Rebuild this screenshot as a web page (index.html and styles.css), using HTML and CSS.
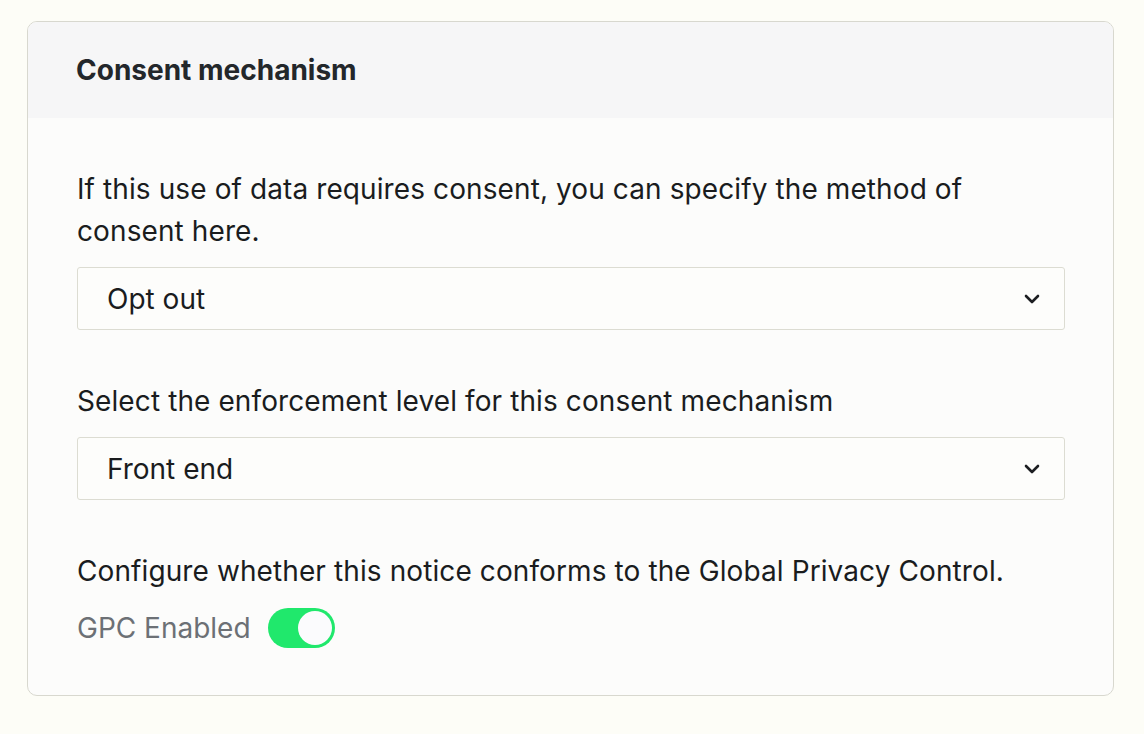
FILE: index.html
```html
<!DOCTYPE html>
<html lang="en">
<head>
<meta charset="utf-8">
<title>Consent mechanism</title>
<link rel="stylesheet" href="styles.css">
</head>
<body>
<section class="card">
  <header class="card-header">
    <h2 class="card-title">Consent mechanism</h2>
  </header>
  <div class="card-body">
    <p class="label">If this use of data requires consent, you can specify the method of consent here.</p>
    <div class="select">
      <span class="select-value">Opt out</span>
      <svg class="chevron" width="16" height="10" viewBox="0 0 16 10"><path d="M2 2 L8 8 L14 2" fill="none" stroke="#1c1e21" stroke-width="2.6" stroke-linecap="round" stroke-linejoin="round"/></svg>
    </div>
    <p class="label gap">Select the enforcement level for this consent mechanism</p>
    <div class="select">
      <span class="select-value">Front end</span>
      <svg class="chevron" width="16" height="10" viewBox="0 0 16 10"><path d="M2 2 L8 8 L14 2" fill="none" stroke="#1c1e21" stroke-width="2.6" stroke-linecap="round" stroke-linejoin="round"/></svg>
    </div>
    <p class="label gap">Configure whether this notice conforms to the Global Privacy Control.</p>
    <div class="switch-row">
      <span class="switch-label">GPC Enabled</span>
      <span class="switch on"><span class="knob"></span></span>
    </div>
  </div>
</section>
</body>
</html>
```

FILE: styles.css
```css
html, body {
  margin: 0;
  padding: 0;
}
body {
  background: #fdfdf7;
  font-family: Inter, "Noto Sans", "Liberation Sans", sans-serif;
  color: #1a1c1e;
  padding: 21px 0 0 27px;
}
.card {
  width: 1085px;
  height: 673px;
  border: 1px solid #d8d8cf;
  border-radius: 10px;
  background: #fcfcfb;
  overflow: hidden;
}
.card-header {
  height: 96px;
  display: flex;
  align-items: center;
  padding-left: 48px;
  background: #f6f6f7;
}
.card-title {
  margin: 0;
  font-size: 28px;
  font-weight: 700;
  color: #23272b;
}
.card-body {
  padding: 50px 48px 0 49px;
}
.label {
  margin: 0 0 15px;
  font-size: 28px;
  line-height: 42px;
  letter-spacing: 0.1px;
  color: #1a1c1e;
}
.label.gap {
  margin-top: 50px;
}
.select {
  height: 61px;
  border: 1px solid #dcdcd2;
  border-radius: 3px;
  display: flex;
  align-items: center;
  justify-content: space-between;
  padding: 0 24px 0 29px;
  background: #fdfdfb;
}
.select-value {
  font-size: 28px;
  color: #1a1c1e;
}
.chevron {
  display: block;
}
.switch-row {
  display: flex;
  align-items: center;
  gap: 17px;
  margin-top: 16px;
  height: 40px;
}
.switch-label {
  font-size: 28px;
  color: #6c7075;
}
.switch {
  position: relative;
  width: 67px;
  height: 40px;
  border-radius: 20px;
  background: #20e86c;
  display: block;
}
.switch .knob {
  position: absolute;
  top: 3px;
  right: 3px;
  width: 34px;
  height: 34px;
  border-radius: 50%;
  background: #fbfbfd;
}
```
